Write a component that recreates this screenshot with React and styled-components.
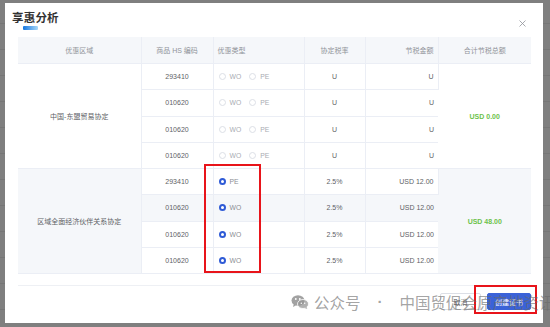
import React from "react";
import styled, { createGlobalStyle } from "styled-components";

const GlobalStyle = createGlobalStyle`
  html, body {
    margin: 0;
    padding: 0;
  }
  body {
    font-family: "Liberation Sans", "Noto Sans CJK SC", sans-serif;
    background: #7f7f7f;
  }
`;

const Page = styled.div`
  position: relative;
  width: 550px;
  height: 327px;
  overflow: hidden;
  background-color: #7f7f7f;
  background-image: repeating-linear-gradient(
    to bottom,
    transparent 0,
    transparent 25px,
    #767676 25px,
    #767676 26px
  );
  background-position: 0 -2px;
  padding: 3px 0 0 5px;
  box-sizing: border-box;
`;

const Modal = styled.div`
  width: 538px;
  height: 320px;
  background: #fff;
  display: flex;
  flex-direction: column;
  box-sizing: border-box;
`;

const Header = styled.div`
  display: flex;
  justify-content: space-between;
  align-items: flex-start;
  padding: 9px 17px 0 7px;
`;

const TitleBox = styled.div`
  display: flex;
  flex-direction: column;
`;

const Title = styled.div`
  font-size: 11.5px;
  line-height: 13px;
  font-weight: 700;
  color: #333;
  letter-spacing: 0.2px;
`;

const TitleBar = styled.div`
  width: 15px;
  height: 4px;
  margin: 1px 0 0 11px;
  background: linear-gradient(90deg, #1677e0, #a9d8f8);
  border-radius: 1px;
`;

const Close = styled.div`
  margin-top: 8px;
  width: 7px;
  height: 7px;
  display: flex;
`;

const Body = styled.div`
  padding: 7px 12px 0 13px;
`;

const Table = styled.table`
  width: 513px;
  border-collapse: collapse;
  table-layout: fixed;
  font-size: 7px;
  color: #606266;
`;

const Th = styled.th`
  height: 26px;
  padding: 0 4px;
  background: #f5f7fa;
  font-weight: 400;
  color: #909399;
  text-align: ${(p) => p.$align || "center"};
  border-right: 1px solid #ebeef5;
  border-bottom: 1px solid #ebeef5;
  &:last-child {
    border-right: none;
  }
`;

const Tr = styled.tr`
  height: 26.25px;
  background: ${(p) => (p.$hover ? "#f5f7fa" : "#fff")};
`;

const Td = styled.td`
  padding: 0 4px;
  text-align: ${(p) => p.$align || "center"};
  border-right: 1px solid #ebeef5;
  border-bottom: 1px solid #ebeef5;
  background: ${(p) => (p.$shade ? "#f5f7fa" : "transparent")};
  white-space: nowrap;
  &:last-child {
    border-right: none;
  }
`;

const Total = styled.span`
  color: #6cc24a;
  font-weight: 600;
`;

const RadioGroup = styled.div`
  display: flex;
  align-items: center;
  gap: 8px;
  padding-left: 1px;
`;

const Radio = styled.label`
  display: flex;
  align-items: center;
  gap: 4px;
  color: ${(p) => (p.$on ? "#8a8d93" : "#a8abb2")};
  font-size: 6.8px;
`;

const Dot = styled.span`
  width: 7px;
  height: 7px;
  border-radius: 50%;
  box-sizing: border-box;
  border: ${(p) => (p.$on ? "2.2px solid #2f5bd6" : "1px solid #dcdfe6")};
  background: #fff;
`;

const Divider = styled.div`
  margin: 11px 0 0;
  height: 1px;
  background: #eef0f4;
`;

const Footer = styled.div`
  display: flex;
  justify-content: flex-end;
  gap: 6px;
  padding: 7px 0 0;
`;

const Button = styled.div`
  height: 17px;
  width: ${(p) => p.$w}px;
  box-sizing: border-box;
  display: flex;
  align-items: center;
  justify-content: center;
  font-size: 7px;
  border-radius: 2px;
  color: ${(p) => (p.$primary ? "#fff" : "#606266")};
  background: ${(p) => (p.$primary ? "#3a62d8" : "#fff")};
  border: 1px solid ${(p) => (p.$primary ? "#3a62d8" : "#dcdfe6")};
`;

const Mark = styled.div`
  position: absolute;
  left: ${(p) => p.$x}px;
  top: ${(p) => p.$y}px;
  width: ${(p) => p.$w}px;
  height: ${(p) => p.$h}px;
  border: 2px solid #e8141a;
  box-sizing: border-box;
  pointer-events: none;
`;

const Watermark = styled.div`
  position: absolute;
  left: 291px;
  top: 293px;
  display: flex;
  align-items: center;
  font-family: "Noto Sans CJK SC", sans-serif;
  font-size: 15.5px;
  line-height: 18px;
  color: rgba(105, 105, 105, 0.62);
  white-space: nowrap;
  pointer-events: none;
`;

const WmText = styled.span`
  margin-left: ${(p) => p.$gap || 0}px;
`;

const WmSep = styled.span`
  width: 39px;
  text-align: center;
  font-family: "Liberation Sans", sans-serif;
  font-weight: 700;
`;

const WeChat = () => (
  <svg width="18" height="16" viewBox="0 0 18 16">
    <ellipse cx="7" cy="6.5" rx="6.5" ry="5.3" fill="rgba(105,105,105,0.62)" />
    <path d="M2.6 10.4 L2 13 L4.8 11.4 Z" fill="rgba(105,105,105,0.62)" />
    <ellipse cx="12" cy="10" rx="5.5" ry="4.5" fill="rgba(150,150,150,0.75)" stroke="#fff" strokeWidth="0.8" />
    <path d="M15.5 13 L16.3 15 L13.6 14 Z" fill="rgba(150,150,150,0.75)" />
    <circle cx="4.8" cy="5" r="0.9" fill="#fff" />
    <circle cx="8.8" cy="5" r="0.9" fill="#fff" />
    <circle cx="10.3" cy="9.3" r="0.7" fill="#fff" />
    <circle cx="13.7" cy="9.3" r="0.7" fill="#fff" />
  </svg>
);

const groupA = ["293410", "010620", "010620", "010620"];
const groupB = [
  { code: "293410", type: "PE" },
  { code: "010620", type: "WO" },
  { code: "010620", type: "WO" },
  { code: "010620", type: "WO" },
];

function Options() {
  return (
    <RadioGroup>
      <Radio>
        <Dot />
        WO
      </Radio>
      <Radio>
        <Dot />
        PE
      </Radio>
    </RadioGroup>
  );
}

export default function App() {
  return (
    <Page>
      <GlobalStyle />
      <Modal>
        <Header>
          <TitleBox>
            <Title>享惠分析</Title>
            <TitleBar />
          </TitleBox>
          <Close>
            <svg width="7" height="7" viewBox="0 0 7 7">
              <path d="M0.5 0.5 L6.5 6.5 M6.5 0.5 L0.5 6.5" stroke="#909399" strokeWidth="0.8" />
            </svg>
          </Close>
        </Header>
        <Body>
          <Table>
            <colgroup>
              <col style={{ width: 123 }} />
              <col style={{ width: 72 }} />
              <col style={{ width: 91 }} />
              <col style={{ width: 61 }} />
              <col style={{ width: 73 }} />
              <col style={{ width: 93 }} />
            </colgroup>
            <thead>
              <tr>
                <Th>优惠区域</Th>
                <Th>商品 HS 编码</Th>
                <Th $align="left">优惠类型</Th>
                <Th>协定税率</Th>
                <Th $align="right">节税金额</Th>
                <Th>合计节税总额</Th>
              </tr>
            </thead>
            <tbody>
              {groupA.map((code, i) => (
                <Tr key={"a" + i}>
                  {i === 0 && <Td rowSpan={4}>中国-东盟贸易协定</Td>}
                  <Td>{code}</Td>
                  <Td $align="left">
                    <Options />
                  </Td>
                  <Td>U</Td>
                  <Td $align="right">U</Td>
                  {i === 0 && (
                    <Td rowSpan={4}>
                      <Total>USD 0.00</Total>
                    </Td>
                  )}
                </Tr>
              ))}
              {groupB.map((row, i) => (
                <Tr key={"b" + i} $hover={i === 1}>
                  {i === 0 && (
                    <Td rowSpan={4} $shade>
                      区域全面经济伙伴关系协定
                    </Td>
                  )}
                  <Td>{row.code}</Td>
                  <Td $align="left">
                    <RadioGroup>
                      <Radio $on>
                        <Dot $on />
                        {row.type}
                      </Radio>
                    </RadioGroup>
                  </Td>
                  <Td>2.5%</Td>
                  <Td $align="right">USD 12.00</Td>
                  {i === 0 && (
                    <Td rowSpan={4} $shade>
                      <Total>USD 48.00</Total>
                    </Td>
                  )}
                </Tr>
              ))}
            </tbody>
          </Table>
          <Divider />
          <Footer>
            <Button $w={41}>取消</Button>
            <Button $w={44} $primary>
              创建证书
            </Button>
          </Footer>
        </Body>
      </Modal>
      <Mark $x={204} $y={164} $w={57} $h={109} />
      <Mark $x={474} $y={285} $w={63} $h={29} />
      <Watermark>
        <WeChat />
        <WmText $gap={5}>公众号</WmText>
        <WmSep>·</WmSep>
        <WmText>中国贸促会原产地资讯</WmText>
      </Watermark>
    </Page>
  );
}
